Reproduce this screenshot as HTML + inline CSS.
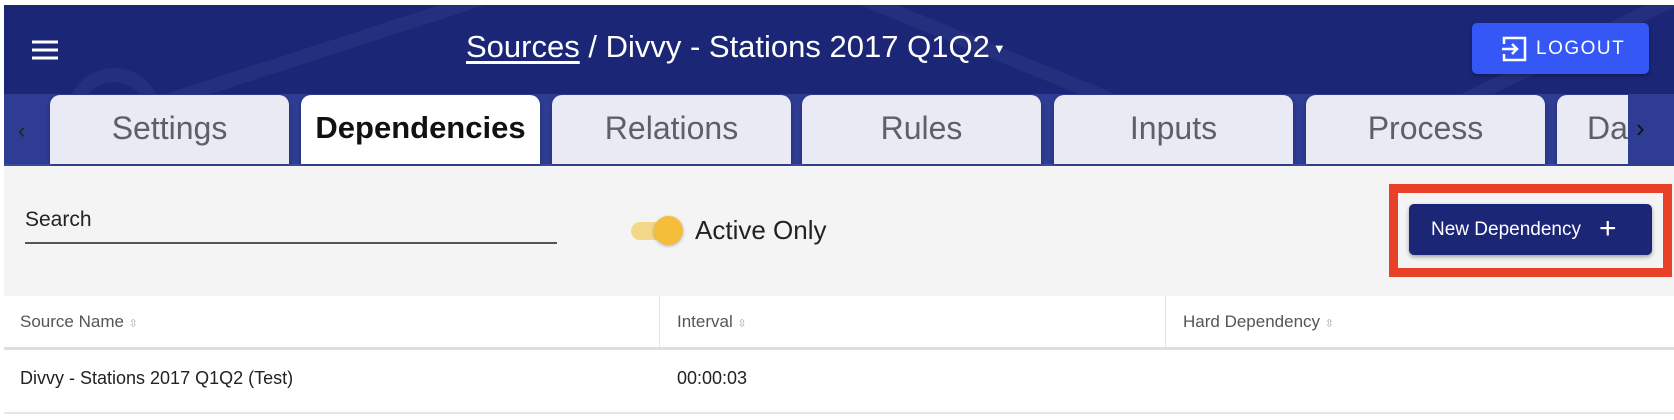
<!DOCTYPE html>
<html><head><meta charset="utf-8"><style>
*{margin:0;padding:0;box-sizing:border-box}
body{width:1674px;height:420px;background:#fff;font-family:"Liberation Sans",sans-serif;position:relative;overflow:hidden}
.hdr{position:absolute;left:4px;top:5px;width:1670px;height:90px;background:#1b2676;overflow:hidden}
.tabbar{position:absolute;left:4px;top:94px;width:1670px;height:72px;background:#2e3d93;border-bottom:2px solid #3a4aa0}
.tab{position:absolute;top:1px;height:69px;width:239px;background:#e9eaf3;border-radius:10px 10px 0 0;text-align:center;font-size:32px;color:#5e6068;line-height:66px;box-shadow:0 2px 4px rgba(0,0,0,.25)}
.tab.act{background:#fff;color:#111;font-weight:bold;font-size:31px}
.gray{position:absolute;left:4px;top:166px;width:1670px;height:130px;background:#f4f4f4}
.abs{position:absolute}
.th{position:absolute;font-size:17px;color:#555}
</style></head><body>
<div class="hdr">
<svg class="abs" style="left:0;top:0" width="1670" height="90"><g stroke="#24307e" stroke-width="14" fill="none"><path d="M150 100 L520 -20"/><path d="M850 -10 L1120 100"/><path d="M1450 100 L1700 -20"/><circle cx="110" cy="110" r="40"/></g></svg>
<svg class="abs" style="left:28px;top:34px" width="28" height="22"><g stroke="#fff" stroke-width="3"><path d="M0 3H26M0 11H26M0 19H26"/></g></svg>
<div class="abs" style="left:462px;top:24px;color:#fff;font-size:31px;white-space:nowrap"><span style="text-decoration:underline;text-underline-offset:4px">Sources</span> / Divvy - Stations 2017 Q1Q2<span style="font-size:13px;vertical-align:middle;margin-left:3px">▼</span></div>
<div class="abs" style="left:1468px;top:18px;width:177px;height:51px;background:#3457f5;border-radius:5px;color:#fff;font-size:19px;letter-spacing:1.5px;line-height:51px;padding-left:64px;box-shadow:0 2px 4px rgba(0,0,0,.3)">LOGOUT
<svg class="abs" style="left:30px;top:13px" width="26" height="26"><g stroke="#fff" stroke-width="2.5" fill="none"><path d="M2 8V2H23V24H2V18"/><path d="M0 13H15M10 8L15 13L10 18"/></g></svg></div>
</div>
<div class="tabbar">
<div class="abs" style="left:14px;top:24px;color:#222;font-size:22px">‹</div>
<div class="tab" style="left:46px">Settings</div>
<div class="tab act" style="left:297px">Dependencies</div>
<div class="tab" style="left:548px">Relations</div>
<div class="tab" style="left:798px">Rules</div>
<div class="tab" style="left:1050px">Inputs</div>
<div class="tab" style="left:1302px">Process</div>
<div class="tab" style="left:1553px;text-align:left;padding-left:30px">Data</div>
<div class="abs" style="left:1624px;top:0;width:46px;height:70px;background:#2e3d93;color:#111;font-size:26px;line-height:68px;padding-left:8px">›</div>
</div>
<div class="gray"></div>
<div class="abs" style="left:25px;top:208px;font-size:21px;color:#222">Search</div>
<div class="abs" style="left:25px;top:242px;width:532px;height:2px;background:#555"></div>
<div class="abs" style="left:631px;top:222px;width:44px;height:18px;border-radius:9px;background:#f3d88a"></div>
<div class="abs" style="left:654px;top:216px;width:29px;height:29px;border-radius:50%;background:#f5be3a;box-shadow:0 1px 3px rgba(0,0,0,.3)"></div>
<div class="abs" style="left:695px;top:215px;font-size:26px;color:#222">Active Only</div>
<div class="abs" style="left:1389px;top:184px;width:283px;height:93px;border:9px solid #e94128"></div>
<div class="abs" style="left:1409px;top:204px;width:243px;height:51px;background:#1b2676;border-radius:5px;color:#fff;font-size:19px;line-height:51px;padding-left:22px;box-shadow:0 2px 4px rgba(0,0,0,.35)">New Dependency<span style="position:absolute;left:190px;top:-1px;font-size:30px;font-weight:300">+</span></div>
<div class="abs" style="left:4px;top:296px;width:1670px;height:52px;background:#fff"></div>
<div class="abs" style="left:659px;top:296px;width:1px;height:52px;background:#e4e4e4"></div>
<div class="abs" style="left:1165px;top:296px;width:1px;height:52px;background:#e4e4e4"></div>
<div class="th" style="left:20px;top:312px">Source Name <span style="font-size:11px;color:#aaa">⇳</span></div>
<div class="th" style="left:677px;top:312px">Interval <span style="font-size:11px;color:#aaa">⇳</span></div>
<div class="th" style="left:1183px;top:312px">Hard Dependency <span style="font-size:11px;color:#aaa">⇳</span></div>
<div class="abs" style="left:4px;top:347px;width:1670px;height:3px;background:#dedede"></div>
<div class="abs" style="left:20px;top:368px;font-size:18px;color:#222">Divvy - Stations 2017 Q1Q2 (Test)</div>
<div class="abs" style="left:677px;top:368px;font-size:18px;color:#222">00:00:03</div>
<div class="abs" style="left:4px;top:412px;width:1670px;height:2px;background:#e6e6e6"></div>
</body></html>
